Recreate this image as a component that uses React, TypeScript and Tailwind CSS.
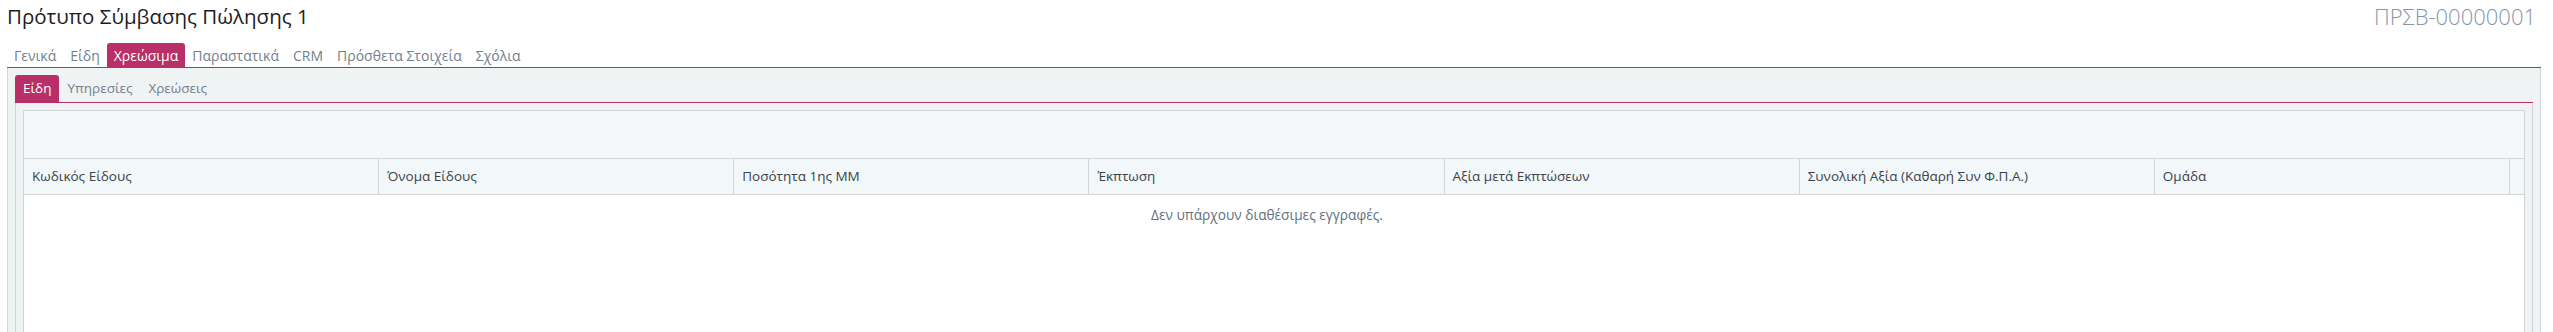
const FONT = "font-['Open_Sans','Noto_Sans',sans-serif]";

const mainTabs = ["Γενικά", "Είδη", "Χρεώσιμα", "Παραστατικά", "CRM", "Πρόσθετα Στοιχεία", "Σχόλια"];
const subTabs = ["Είδη", "Υπηρεσίες", "Χρεώσεις"];
const columns = [
  "Κωδικός Είδους",
  "Όνομα Είδους",
  "Ποσότητα 1ης ΜΜ",
  "Έκπτωση",
  "Αξία μετά Εκπτώσεων",
  "Συνολική Αξία (Καθαρή Συν Φ.Π.Α.)",
  "Ομάδα",
];

const TabBar = ({ tabs, active, tall }: { tabs: string[]; active: string; tall?: boolean }) => (
  <div className="flex items-end border-b border-[#b92f68]">
    {tabs.map((t) => (
      <div
        key={t}
        className={`${tall ? "h-[27px] px-[8px] text-[13.5px]" : "h-[24px] px-[7px] text-[14px]"} flex items-center rounded-t-[3px] ${
          t === active ? "bg-[#b92f68] text-white" : "text-[#717f8d]"
        }`}
      >
        {t}
      </div>
    ))}
  </div>
);

export default function App() {
  return (
    <div className={`${FONT} h-screen overflow-hidden bg-white pl-[7px] pr-[12px]`}>
      <div className="flex h-[43px] items-start justify-between pt-[1px] pr-[5px]">
        <h1 className="text-[20.5px] leading-[30px] text-[#1d1d1d]">Πρότυπο Σύμβασης Πώλησης 1</h1>
        <div className="text-[22px] font-light leading-[30px] text-[#8696a6]">ΠΡΣΒ-00000001</div>
      </div>

      <TabBar tabs={mainTabs} active="Χρεώσιμα" />

      <div className="border-x border-[#d2d5d7] bg-[#f0f3f4] px-[7px] pt-[7px]">
        <TabBar tabs={subTabs} active="Είδη" tall />

        <div className="border-x border-[#d2d5d7] bg-[#f0f3f4] px-[7px] pt-[7px]">
          <div className="border border-[#d2d5d7] bg-white">
            <div className="h-[47px] bg-[#f5f7f9]" />
            <div className="grid grid-cols-[repeat(7,minmax(0,1fr))_14px] border-y border-[#d2d5d7] bg-[#f2f7fa]">
              {columns.map((c) => (
                <div
                  key={c}
                  className="flex h-[35px] items-center truncate border-r border-[#d2d5d7] px-[8px] text-[13.5px] text-[#3b4248]"
                >
                  {c}
                </div>
              ))}
              <div />
            </div>
            <div className="grid h-[200px] grid-cols-[minmax(0,1fr)_14px]">
              <div className="pt-[11px] text-center text-[13.7px] leading-[18px] text-[#607080]">
                Δεν υπάρχουν διαθέσιμες εγγραφές.
              </div>
              <div />
            </div>
          </div>
        </div>
      </div>
    </div>
  );
}
